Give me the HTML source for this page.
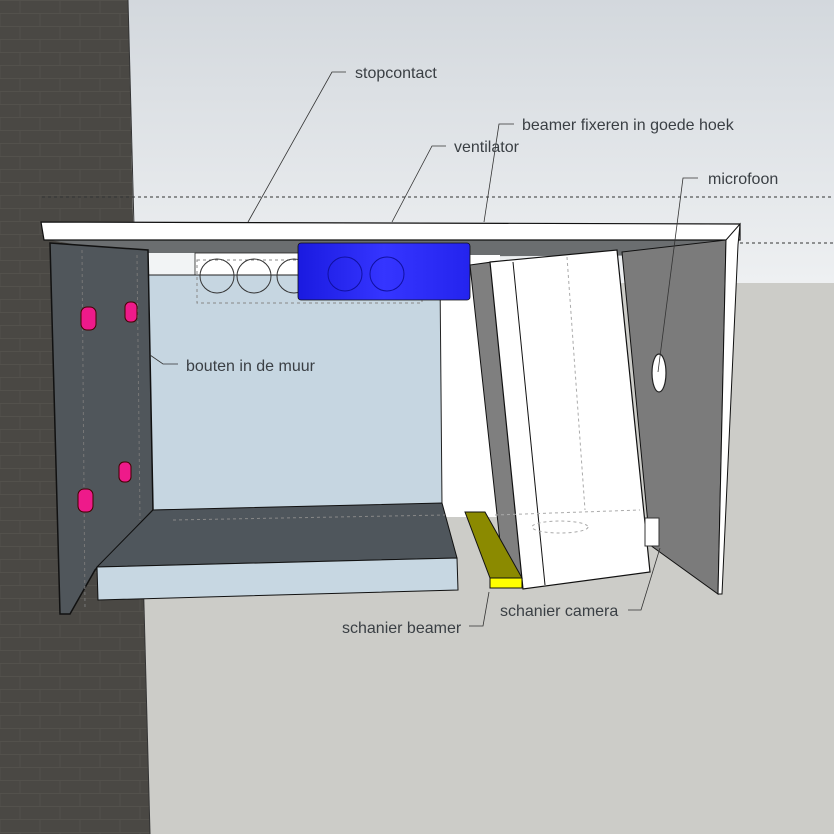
<!DOCTYPE html>
<html><head><meta charset="utf-8"><style>
html,body{margin:0;padding:0;width:834px;height:834px;overflow:hidden;background:#ccccc8}
svg{display:block}
text{font-family:"Liberation Sans",sans-serif;font-size:16px;fill:#3a3f44}
</style></head><body>
<svg width="834" height="834" viewBox="0 0 834 834" xmlns="http://www.w3.org/2000/svg">
<defs>
<linearGradient id="sky" x1="0" y1="0" x2="0" y2="1">
<stop offset="0" stop-color="#d3d8dd"/><stop offset="1" stop-color="#eef0f2"/>
</linearGradient>
<linearGradient id="blue" x1="0" y1="0" x2="1" y2="0">
<stop offset="0" stop-color="#1a1ae0"/><stop offset="0.5" stop-color="#3535ff"/><stop offset="1" stop-color="#2424ee"/>
</linearGradient>
<pattern id="brick" width="40" height="26" patternUnits="userSpaceOnUse">
<rect width="40" height="26" fill="#4a4844"/>
<path d="M0 0.5H40M0 13.5H40M20 0V13M0 13V26M40 13V26" stroke="#53514c" stroke-width="1"/>
</pattern>
</defs>
<rect width="834" height="283" fill="url(#sky)"/>
<rect y="283" width="834" height="551" fill="#ccccc8"/>
<polygon points="0,0 128,0 134,260 150,834 0,834" fill="url(#brick)"/>
<line x1="128" y1="0" x2="150" y2="834" stroke="#333" stroke-width="1"/>
<line x1="42" y1="197" x2="834" y2="197" stroke="#333" stroke-dasharray="3,3"/>
<line x1="740" y1="243" x2="834" y2="243" stroke="#333" stroke-dasharray="3,3"/>
<polygon points="50,240 738,240 730,255 150,258" fill="#6b6e70"/>
<rect x="440" y="255" width="60" height="262" fill="#fff"/>
<rect x="148" y="253" width="80" height="22" fill="#f2f4f5"/>
<rect x="195" y="253" width="110" height="22" fill="#fff" stroke="#222" stroke-width="0.8"/>
<polygon points="148,275 440,275 442,505 153,510" fill="#c6d6e1" stroke="#222" stroke-width="1"/>
<rect x="197" y="260" width="225" height="43" fill="none" stroke="#888" stroke-dasharray="3,3"/>
<g fill="none" stroke="#333" stroke-width="1">
<circle cx="217" cy="276" r="17"/><circle cx="254" cy="276" r="17"/><circle cx="294" cy="276" r="17"/>
</g>
<polygon points="50,243 148,250 153,510 95,570 70,614 60,614" fill="#50565b" stroke="#111" stroke-width="1.5"/>
<line x1="82" y1="250" x2="85" y2="610" stroke="#777" stroke-dasharray="3,3"/>
<line x1="137" y1="255" x2="140" y2="520" stroke="#777" stroke-dasharray="3,3"/>
<g fill="#ee1a8a" stroke="#400" stroke-width="1">
<rect x="81" y="307" width="15" height="23" rx="6"/>
<rect x="125" y="302" width="12" height="20" rx="5"/>
<rect x="119" y="462" width="12" height="20" rx="5"/>
<rect x="78" y="489" width="15" height="23" rx="6"/>
</g>
<polygon points="153,510 442,503 457,558 97,567" fill="#4f565c" stroke="#111" stroke-width="1"/>
<polygon points="97,567 457,558 458,590 98,600" fill="#c7d7e2" stroke="#111" stroke-width="1"/>
<line x1="173" y1="520" x2="445" y2="515" stroke="#888" stroke-dasharray="3,3"/>
<rect x="298" y="243" width="172" height="57" rx="3" fill="url(#blue)" stroke="#111" stroke-width="0.8"/>
<g fill="none" stroke="#1010a0" stroke-width="1">
<circle cx="345" cy="274" r="17"/><circle cx="387" cy="274" r="17"/>
</g>
<polygon points="41,222 740,224 740,240 44,240" fill="#fff" stroke="#111" stroke-width="1.2"/>
<polygon points="622,252 726,240 718,594 650,545" fill="#7b7b7b" stroke="#111" stroke-width="1"/>
<polygon points="726,240 740,224 738,245 722,594 718,594" fill="#fff" stroke="#111" stroke-width="1"/>
<polygon points="470,265 492,262 525,588 505,588" fill="#7f7f7f" stroke="#111" stroke-width="1"/>
<polygon points="490,262 617,250 650,572 523,589" fill="#fff" stroke="#111" stroke-width="1.2"/>
<line x1="513" y1="262" x2="545" y2="585" stroke="#111" stroke-width="1"/>
<g fill="none" stroke="#aaa" stroke-dasharray="3,3">
<line x1="567" y1="257" x2="585" y2="510"/><line x1="495" y1="515" x2="640" y2="510"/>
<ellipse cx="560" cy="527" rx="28" ry="6"/>
</g>
<rect x="645" y="518" width="14" height="28" fill="#fff" stroke="#333"/>
<polygon points="465,512 485,512 522,578 490,578" fill="#8b8a00" stroke="#111" stroke-width="1"/>
<rect x="490" y="578" width="32" height="10" fill="#ffff00" stroke="#111" stroke-width="1"/>
<ellipse cx="659" cy="373" rx="7" ry="19" fill="#fff" stroke="#222" stroke-width="1.2"/>
<g stroke="#333" stroke-width="0.8" fill="none">
<polyline points="248,222 332,72 346,72"/>
<polyline points="392,222 432,146 446,146"/>
<polyline points="484,222 499,124 514,124"/>
<polyline points="658,372 683,178 698,178"/>
<polyline points="150,355 163,364 178,364"/>
<polyline points="489,592 483,626 469,626"/>
<polyline points="660,548 641,610 628,610"/>
</g>
<text x="355" y="78">stopcontact</text>
<text x="454" y="152">ventilator</text>
<text x="522" y="130">beamer fixeren in goede hoek</text>
<text x="708" y="184">microfoon</text>
<text x="186" y="371">bouten in de muur</text>
<text x="342" y="633">schanier beamer</text>
<text x="500" y="616">schanier camera</text>
</svg>
</body></html>
